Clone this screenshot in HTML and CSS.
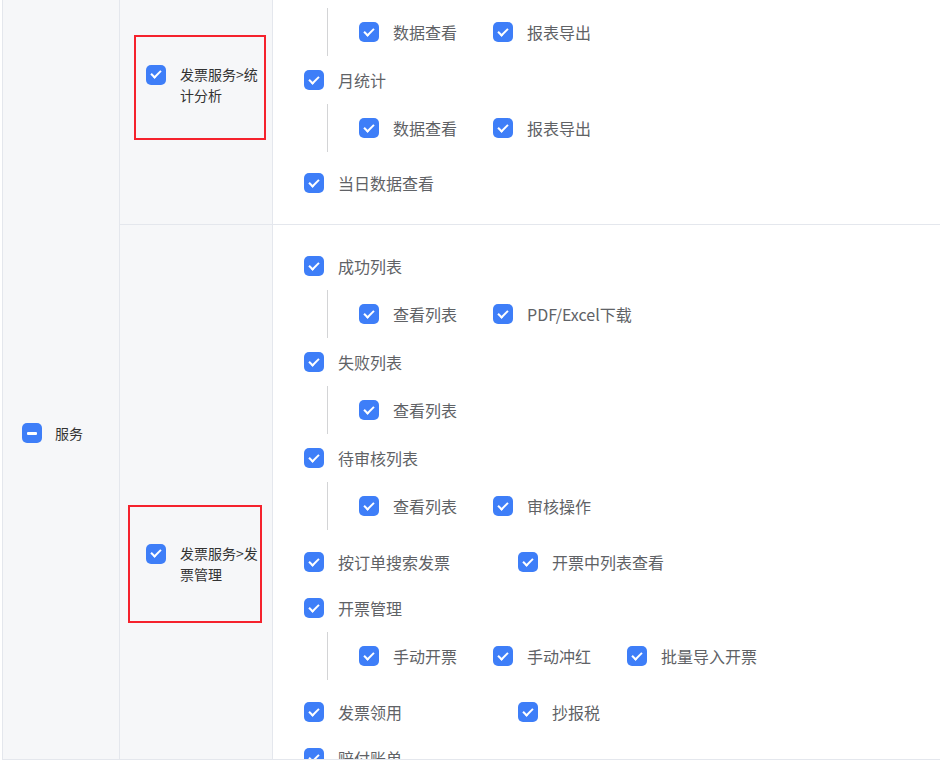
FILE: index.html
```html
<!DOCTYPE html>
<html lang="zh-CN">
<head>
    <meta charset="UTF-8">
    <meta name="viewport" content="width=device-width, initial-scale=1.0">
    <title>权限配置</title>
    <link rel="stylesheet" href="styles.css">
</head>
<body>
    <div class="perm-table">
        <div class="col-module">
            <label class="module-label"><span class="cb minus"></span>服务</label>
        </div>
        <div class="col-pages">
            <div class="page-row">
                <div class="page-name page-name-stat">
                    <div class="mark mark-stat">
                        <label class="page-label"><span class="cb"></span><span class="page-text">发票服务&gt;统计分析</span></label>
                    </div>
                </div>
                <div class="page-perms perms-top">
                    <div class="group">
                        <div class="node">
                            <div class="children children-first">
                                <label class="item sub"><span class="cb"></span>数据查看</label>
                                <label class="item sub"><span class="cb"></span>报表导出</label>
                            </div>
                        </div>
                        <div class="node">
                            <label class="item"><span class="cb"></span>月统计</label>
                            <div class="children">
                                <label class="item sub"><span class="cb"></span>数据查看</label>
                                <label class="item sub"><span class="cb"></span>报表导出</label>
                            </div>
                        </div>
                    </div>
                    <div class="group">
                        <label class="item"><span class="cb"></span>当日数据查看</label>
                    </div>
                </div>
            </div>
            <div class="page-row page-row-last">
                <div class="page-name page-name-invoice">
                    <div class="mark mark-invoice">
                        <label class="page-label"><span class="cb"></span><span class="page-text">发票服务&gt;发票管理</span></label>
                    </div>
                </div>
                <div class="page-perms perms-bottom">
                    <div class="group">
                        <div class="node">
                            <label class="item"><span class="cb"></span>成功列表</label>
                            <div class="children">
                                <label class="item sub"><span class="cb"></span>查看列表</label>
                                <label class="item sub"><span class="cb"></span>PDF/Excel下载</label>
                            </div>
                        </div>
                        <div class="node">
                            <label class="item"><span class="cb"></span>失败列表</label>
                            <div class="children">
                                <label class="item sub"><span class="cb"></span>查看列表</label>
                            </div>
                        </div>
                        <div class="node">
                            <label class="item"><span class="cb"></span>待审核列表</label>
                            <div class="children">
                                <label class="item sub"><span class="cb"></span>查看列表</label>
                                <label class="item sub"><span class="cb"></span>审核操作</label>
                            </div>
                        </div>
                    </div>
                    <div class="group leafs">
                        <label class="item wide"><span class="cb"></span>按订单搜索发票</label>
                        <label class="item wide"><span class="cb"></span>开票中列表查看</label>
                    </div>
                    <div class="group">
                        <div class="node">
                            <label class="item"><span class="cb"></span>开票管理</label>
                            <div class="children">
                                <label class="item sub"><span class="cb"></span>手动开票</label>
                                <label class="item sub"><span class="cb"></span>手动冲红</label>
                                <label class="item sub"><span class="cb"></span>批量导入开票</label>
                            </div>
                        </div>
                    </div>
                    <div class="group leafs">
                        <label class="item wide"><span class="cb"></span>发票领用</label>
                        <label class="item wide"><span class="cb"></span>抄报税</label>
                    </div>
                    <div class="group leafs">
                        <label class="item wide"><span class="cb"></span>赔付账单</label>
                    </div>
                </div>
            </div>
        </div>
    </div>
</body>
</html>
```

FILE: styles.css
```css
body {
    margin: 0;
    font-family: "Noto Sans CJK SC", "Noto Sans", sans-serif;
    background-color: #fff;
    overflow: hidden;
}
.perm-table {
    display: flex;
    margin-left: 2px;
    height: 759px;
    overflow: hidden;
    border-left: 1px solid #e4e7ed;
    border-bottom: 1px solid #e4e7ed;
}
.col-module {
    width: 117px;
    flex-shrink: 0;
    padding: 423px 0 0 19px;
    box-sizing: border-box;
    background-color: #f6f7f9;
    border-right: 1px solid #e4e7ed;
}
.module-label {
    display: flex;
    align-items: center;
    gap: 13px;
    font-size: 14px;
    line-height: 20px;
    color: #333;
}
.col-pages {
    flex: 1;
    display: flex;
    flex-direction: column;
}
.page-row {
    display: flex;
    border-bottom: 1px solid #e4e7ed;
}
.page-row-last {
    flex: 1;
    border-bottom: none;
}
.page-name {
    width: 153px;
    flex-shrink: 0;
    box-sizing: border-box;
    background-color: #f6f7f9;
    border-right: 1px solid #e4e7ed;
}
.page-name-stat {
    padding: 35px 0 0 14px;
}
.page-name-invoice {
    padding: 280px 0 0 8px;
}
.mark {
    display: inline-block;
    border: 2px solid #f5222d;
}
.mark-stat {
    padding: 27px 4px 32px 10px;
}
.mark-invoice {
    padding: 36px 0 36px 16px;
}
.page-label {
    display: flex;
    align-items: flex-start;
    gap: 14px;
    font-size: 14px;
    line-height: 21px;
    color: #333;
}
.page-label .cb {
    margin-top: 0.5px;
}
.page-text {
    width: 80px;
}
.page-perms {
    flex: 1;
    padding-left: 31px;
}
.perms-top {
    padding-top: 8px;
    padding-bottom: 27px;
}
.perms-bottom {
    padding-top: 27px;
}
.group + .group {
    margin-top: 18px;
}
.perms-top .group + .group {
    margin-top: 17px;
}
.node + .node {
    margin-top: 10px;
}
.leafs {
    display: flex;
}
.item {
    display: flex;
    align-items: center;
    gap: 14px;
    height: 28px;
    font-size: 16px;
    color: #606266;
    white-space: nowrap;
}
.item.wide {
    width: 214px;
}
.children {
    display: flex;
    align-items: center;
    height: 48px;
    margin: 10px 0 0 23px;
    padding-left: 31px;
    border-left: 1px solid #d3d4d6;
}
.children-first {
    margin-top: 0;
}
.item.sub {
    width: 134px;
}
.cb {
    position: relative;
    display: inline-block;
    width: 20px;
    height: 20px;
    flex-shrink: 0;
    border-radius: 5px;
    background-color: #3e7ef8;
}
.cb::after {
    content: '';
    position: absolute;
    left: 7px;
    top: 3.5px;
    width: 4px;
    height: 8px;
    border: solid #fff;
    border-width: 0 2.5px 2.5px 0;
    transform: rotate(45deg);
}
.cb.minus::after {
    left: 5px;
    top: 8.5px;
    width: 10px;
    height: 3px;
    border: none;
    border-radius: 1px;
    background-color: #fff;
    transform: none;
}
```
